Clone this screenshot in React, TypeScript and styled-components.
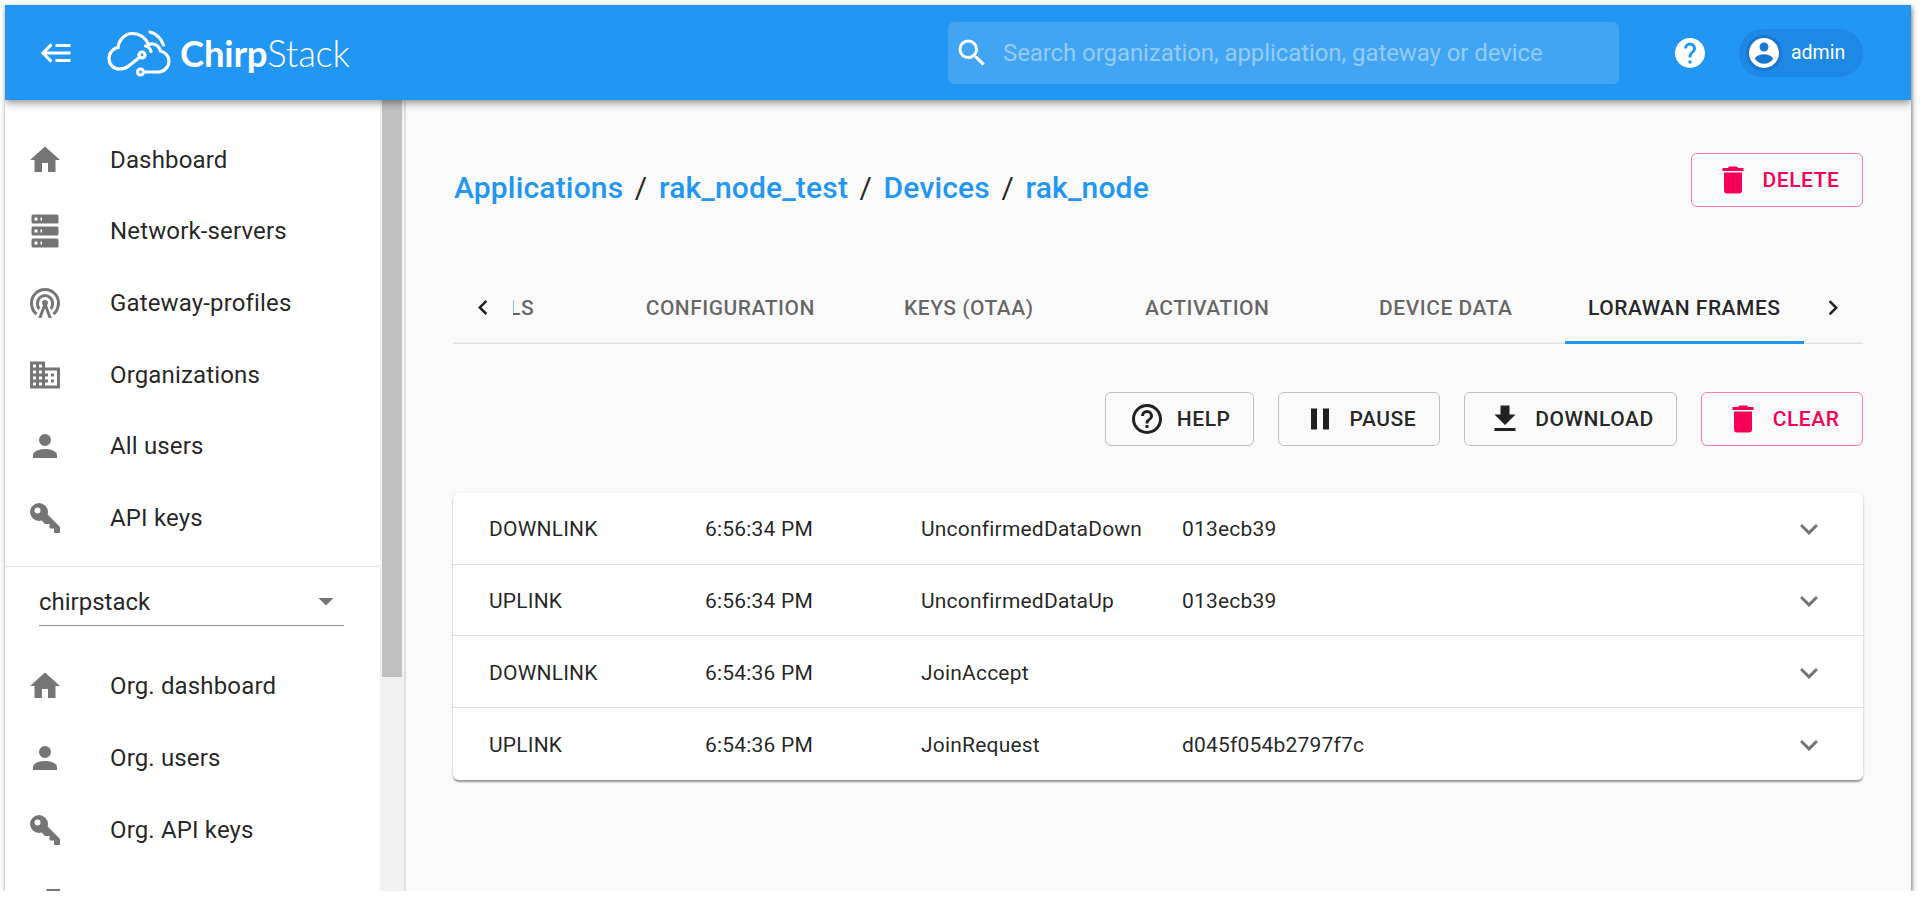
import * as React from 'react';
import styled, { createGlobalStyle } from 'styled-components';

const paths = {
  back: 'M5,13L9,17L7.6,18.42L1.18,12L7.6,5.58L9,7L5,11H21V13H5M21,6V8H11V6H21M21,16V18H11V16H21Z',
  search: 'M9.5,3A6.5,6.5 0 0,1 16,9.5C16,11.11 15.41,12.59 14.44,13.73L14.71,14H15.5L20.5,19L19,20.5L14,15.5V14.71L13.73,14.44C12.59,15.41 11.11,16 9.5,16A6.5,6.5 0 0,1 3,9.5A6.5,6.5 0 0,1 9.5,3M9.5,5C7,5 5,7 5,9.5C5,12 7,14 9.5,14C12,14 14,12 14,9.5C14,7 12,5 9.5,5Z',
  helpSolid: 'M15.07,11.25L14.17,12.17C13.45,12.89 13,13.5 13,15H11V14.5C11,13.39 11.45,12.39 12.17,11.67L13.41,10.41C13.78,10.05 14,9.55 14,9C14,7.89 13.1,7 12,7A2,2 0 0,0 10,9H8A4,4 0 0,1 12,5A4,4 0 0,1 16,9C16,9.88 15.64,10.67 15.07,11.25M13,19H11V17H13M12,2A10,10 0 0,0 2,12A10,10 0 0,0 12,22A10,10 0 0,0 22,12C22,6.47 17.5,2 12,2Z',
  helpOutline: 'M11,18H13V16H11V18M12,2A10,10 0 0,0 2,12A10,10 0 0,0 12,22A10,10 0 0,0 22,12A10,10 0 0,0 12,2M12,20C7.59,20 4,16.41 4,12C4,7.59 7.59,4 12,4C16.41,4 20,7.59 20,12C20,16.41 16.41,20 12,20M12,6A4,4 0 0,0 8,10H10A2,2 0 0,1 12,8A2,2 0 0,1 14,10C14,12 11,11.75 11,15H13C13,12.75 16,12.5 16,10A4,4 0 0,0 12,6Z',
  accountCircle: 'M12,19.2C9.5,19.2 7.29,17.92 6,16C6.03,14 10,12.9 12,12.9C14,12.9 17.97,14 18,16C16.71,17.92 14.5,19.2 12,19.2M12,5A3,3 0 0,1 15,8A3,3 0 0,1 12,11A3,3 0 0,1 9,8A3,3 0 0,1 12,5M12,2A10,10 0 0,0 2,12A10,10 0 0,0 12,22A10,10 0 0,0 22,12C22,6.47 17.5,2 12,2Z',
  home: 'M10,20V14H14V20H19V12H22L12,3L2,12H5V20H10Z',
  server: 'M4,1H20A1,1 0 0,1 21,2V6A1,1 0 0,1 20,7H4A1,1 0 0,1 3,6V2A1,1 0 0,1 4,1M4,9H20A1,1 0 0,1 21,10V14A1,1 0 0,1 20,15H4A1,1 0 0,1 3,14V10A1,1 0 0,1 4,9M4,17H20A1,1 0 0,1 21,18V22A1,1 0 0,1 20,23H4A1,1 0 0,1 3,22V18A1,1 0 0,1 4,17M9,5H10V3H9V5M9,13H10V11H9V13M9,21H10V19H9V21M5,3V5H7V3H5M5,11V13H7V11H5M5,19V21H7V19H5Z',
  tower: 'M12,10A2,2 0 0,0 10,12C10,12.6 10.27,13.13 10.68,13.5L7.5,22H9.6L12,15.5L14.4,22H16.5L13.32,13.5C13.73,13.13 14,12.6 14,12A2,2 0 0,0 12,10M7.5,16.7C6.55,15.63 6,14.2 6,12.6V12A6,6 0 0,1 18,12V12.6C18,14.2 17.45,15.63 16.5,16.7L15.1,15.2C15.66,14.5 16,13.6 16,12.6V12A4,4 0 0,0 8,12V12.6C8,13.6 8.34,14.5 8.9,15.2L7.5,16.7M5.6,20.1C3.4,18.3 2,15.3 2,12A10,10 0 0,1 22,12C22,15.3 20.6,18.3 18.4,20.1L17,18.6C18.85,17.15 20,14.7 20,12A8,8 0 0,0 4,12C4,14.7 5.15,17.15 7,18.6L5.6,20.1Z',
  domain: 'M18,15H16V17H18M18,11H16V13H18M20,19H12V17H14V15H12V13H14V11H12V9H20M10,7H8V5H10M10,11H8V9H10M10,15H8V13H10M10,19H8V17H10M6,7H4V5H6M6,11H4V9H6M6,15H4V13H6M6,19H4V17H6M12,7V3H2V21H22V7H12Z',
  account: 'M12,4A4,4 0 0,1 16,8A4,4 0 0,1 12,12A4,4 0 0,1 8,8A4,4 0 0,1 12,4M12,14C16.42,14 20,15.79 20,18V20H4V18C4,15.79 7.58,14 12,14Z',
  key: 'M22,18V22H18V19H15V16H12L9.74,13.74C9.19,13.91 8.61,14 8,14A6,6 0 0,1 2,8A6,6 0 0,1 8,2A6,6 0 0,1 14,8C14,8.61 13.91,9.19 13.74,9.74L22,18M7,5A2,2 0 0,0 5,7A2,2 0 0,0 7,9A2,2 0 0,0 9,7A2,2 0 0,0 7,5Z',
  details: 'M11,9C11,10.66 9.66,12 8,12C6.34,12 5,10.66 5,9C5,7.34 6.34,6 8,6C9.66,6 11,7.34 11,9M14,20H2V18C2,15.79 4.69,14 8,14C11.31,14 14,15.79 14,18M22,12V14H13V12M22,8V10H13V8M22,4V6H13V4Z',
  pause: 'M14,19H18V5H14M6,19H10V5H6V19Z',
  download: 'M5,20H19V18H5M19,9H15V3H9V9H5L12,16L19,9Z',
  trash: 'M19,4H15.5L14.5,3H9.5L8.5,4H5V6H19M6,19A2,2 0 0,0 8,21H16A2,2 0 0,0 18,19V7H6V19Z',
  tabLeft: 'M15.41 16.09l-4.58-4.59 4.58-4.59L14 5.5l-6 6 6 6z',
  tabRight: 'M8.59 16.34l4.58-4.59-4.58-4.59L10 5.75l6 6-6 6z',
  expand: 'M16.59 8.59L12 13.17 7.41 8.59 6 10l6 6 6-6z',
  dropdown: 'M7 10l5 5 5-5z',
};

const GlobalStyle = createGlobalStyle`
  html, body {
    margin: 0;
    background: #fff;
    overflow: hidden;
  }
  body {
    padding: 5px 0 0 5px;
    font-family: Roboto, "Liberation Sans", sans-serif;
  }
  * { box-sizing: border-box; }
`;

const Svg = styled.svg<{ $size?: number }>`
  width: ${(p) => p.$size ?? 36}px;
  height: ${(p) => p.$size ?? 36}px;
  fill: currentColor;
  flex-shrink: 0;
  display: block;
`;

const Icon = ({ d, size }: { d: string; size?: number }) => (
  <Svg viewBox="0 0 24 24" $size={size}><path d={d} /></Svg>
);

const Frame = styled.div`
  width: 1906px;
  height: 886px;
  display: flex;
  flex-direction: column;
  overflow: hidden;
  background: #fafafa;
  box-shadow: 1px 2px 5px rgba(0, 0, 0, .55);
`;

// Top bar
const Header = styled.header`
  height: 95px;
  flex-shrink: 0;
  display: flex;
  align-items: center;
  padding: 0 48px 0 34px;
  background: #2196f3;
  color: #fff;
  position: relative;
  z-index: 2;
  box-shadow: 0 3px 6px -1px rgba(0, 0, 0, .3), 0 6px 8px 0 rgba(0, 0, 0, .14);
`;

const Logo = styled.div`
  display: flex;
  align-items: center;
  margin-left: 32px;
  width: 841px;
`;

const LogoMark = styled.svg`
  width: 64px;
  height: 48px;
  flex-shrink: 0;
  fill: none;
  stroke: #fff;
  stroke-width: 3.2;
  stroke-linecap: round;
`;

const LogoText = styled.span`
  margin-left: 9px;
  font-family: Lato, sans-serif;
  font-size: 36.5px;
  font-weight: 300;
  letter-spacing: -.2px;
  b { font-weight: 700; }
`;

const Search = styled.div`
  width: 671px;
  height: 62px;
  display: flex;
  align-items: center;
  gap: 13px;
  padding-left: 6px;
  border-radius: 6px;
  background: rgba(255, 255, 255, .15);
`;

const SearchHint = styled.span`
  font-size: 24px;
  letter-spacing: -.08px;
  color: rgba(255, 255, 255, .45);
`;

const HelpLink = styled.div`
  margin-left: 53px;
  display: flex;
`;

const UserChip = styled.div`
  margin-left: 31px;
  height: 48px;
  width: 124px;
  display: flex;
  align-items: center;
  border-radius: 24px;
  background: #1e88e5;
  font-size: 19.5px;
`;

const ChipAvatar = styled.span`
  width: 36px;
  height: 36px;
  margin: 0 9px 0 7px;
  border-radius: 50%;
  background: #1976d2;
  display: flex;
  align-items: center;
  justify-content: center;
`;

// Sidebar
const Body = styled.div`
  flex: 1;
  min-height: 0;
  display: flex;
`;

const Sidebar = styled.nav`
  width: 375px;
  flex-shrink: 0;
  overflow: hidden;
  padding-top: 24px;
  background: #fff;
`;

const ScrollTrack = styled.div`
  width: 24px;
  flex-shrink: 0;
  padding: 0 2px;
  background: #f1f1f1;
`;

const ScrollThumb = styled.div`
  height: 577px;
  background: #c1c1c1;
`;

const SideRule = styled.div`
  width: 1.5px;
  flex-shrink: 0;
  background: #e0e0e0;
`;

const NavList = styled.ul`
  list-style: none;
  margin: 0;
  padding: 0;
`;

const NavItem = styled.li`
  height: 71.67px;
  display: flex;
  align-items: center;
  padding-left: 22px;
  font-size: 24px;
  letter-spacing: .15px;
  color: rgba(0, 0, 0, .87);
`;

const NavIcon = styled.span`
  width: 83px;
  flex-shrink: 0;
  color: rgba(0, 0, 0, .54);
`;

const Divider = styled.hr`
  height: 1.5px;
  margin: 12px 0 0;
  border: 0;
  background: #e0e0e0;
`;

const OrgSelect = styled.div`
  height: 59px;
  margin: 0 36px 24px 34px;
  padding-top: 21px;
  display: flex;
  align-items: flex-start;
  justify-content: space-between;
  border-bottom: 1.5px solid #949494;
  font-size: 24px;
  color: rgba(0, 0, 0, .87);
`;

const OrgArrow = styled.span`
  margin-top: -5px;
  color: rgba(0, 0, 0, .54);
`;

// Main content
const Main = styled.main`
  flex: 1;
  min-width: 0;
  padding: 53px 48px 0 47.5px;
`;

const TitleRow = styled.div`
  display: flex;
  align-items: center;
  justify-content: space-between;
`;

const Crumbs = styled.div`
  display: flex;
  padding: 15px 0 0 1px;
  font-size: 30px;
  font-weight: 500;
  letter-spacing: .17px;
  color: #2196f3;
`;

const CrumbSep = styled.span`
  margin: 0 11.5px;
  font-weight: 400;
  color: rgba(0, 0, 0, .87);
`;

const Button = styled.button<{ $danger?: boolean }>`
  height: 54px;
  display: inline-flex;
  align-items: center;
  gap: 12px;
  padding: 0 22.5px;
  border: 1.5px solid ${(p) => (p.$danger ? 'rgba(245, 0, 87, .5)' : 'rgba(0, 0, 0, .23)')};
  border-radius: 6px;
  background: transparent;
  font-family: inherit;
  font-size: 21px;
  font-weight: 500;
  letter-spacing: .55px;
  text-transform: uppercase;
  color: ${(p) => (p.$danger ? '#f50057' : 'rgba(0, 0, 0, .87)')};
`;

const TabBar = styled.div`
  margin-top: 65px;
  height: 72px;
  display: flex;
  box-shadow: inset 0 -1.5px 0 #e0e0e0;
`;

const TabArrow = styled.div`
  width: 59.5px;
  flex-shrink: 0;
  display: flex;
  align-items: center;
  justify-content: center;
  color: rgba(0, 0, 0, .87);
`;

const TabViewport = styled.div`
  flex: 1;
  min-width: 0;
  overflow: hidden;
  display: flex;
  justify-content: flex-end;
`;

const Tab = styled.div<{ $active?: boolean }>`
  width: 238.5px;
  flex-shrink: 0;
  display: flex;
  align-items: center;
  justify-content: center;
  font-size: 21px;
  font-weight: 500;
  letter-spacing: .5px;
  text-transform: uppercase;
  color: ${(p) => (p.$active ? 'rgba(0, 0, 0, .87)' : 'rgba(0, 0, 0, .6)')};
  box-shadow: ${(p) => (p.$active ? 'inset 0 -3px 0 #2196f3' : 'none')};
`;

const Toolbar = styled.div`
  margin-top: 48px;
  display: flex;
  justify-content: flex-end;
  gap: 24px;
`;

const FrameCard = styled.div`
  margin-top: 47px;
  border-radius: 6px;
  background: #fff;
  box-shadow: 0 1.5px 3px rgba(0, 0, 0, .2), 0 1.5px 1.5px rgba(0, 0, 0, .14), 0 3px 1.5px -1.5px rgba(0, 0, 0, .12);
`;

const FrameRow = styled.div`
  height: 71.67px;
  display: grid;
  grid-template-columns: 216px 216px 261px 1fr 36px;
  align-items: center;
  padding: 2px 36px 0;
  font-size: 21px;
  letter-spacing: .2px;
  color: rgba(0, 0, 0, .87);
  border-bottom: 1.5px solid #e0e0e0;

  &:last-child { border-bottom: 0; }
`;

const Expand = styled.span`
  color: rgba(0, 0, 0, .54);
`;

const topNav = [
  { d: paths.home, label: 'Dashboard' },
  { d: paths.server, label: 'Network-servers' },
  { d: paths.tower, label: 'Gateway-profiles' },
  { d: paths.domain, label: 'Organizations' },
  { d: paths.account, label: 'All users' },
  { d: paths.key, label: 'API keys' },
];

const orgNav = [
  { d: paths.home, label: 'Org. dashboard' },
  { d: paths.account, label: 'Org. users' },
  { d: paths.key, label: 'Org. API keys' },
  { d: paths.details, label: 'Service-profiles' },
];

const tabs = ['Details', 'Configuration', 'Keys (OTAA)', 'Activation', 'Device data', 'LoRaWAN frames'];

const frames = [
  ['DOWNLINK', '6:56:34 PM', 'UnconfirmedDataDown', '013ecb39'],
  ['UPLINK', '6:56:34 PM', 'UnconfirmedDataUp', '013ecb39'],
  ['DOWNLINK', '6:54:36 PM', 'JoinAccept', ''],
  ['UPLINK', '6:54:36 PM', 'JoinRequest', 'd045f054b2797f7c'],
];

export default function App() {
  return (
    <>
      <GlobalStyle />
      <Frame>
        <Header>
          <Icon d={paths.back} />
          <Logo>
            <LogoMark viewBox="0 0 64 48">
              <path d="M33 28 21 37.5C18.5 39.5 16 40 12.5 40 6.5 40 2 35.5 2 29.5 2 23.5 6.500 19 11 18.500 12 10 18.500 4.500 25.500 4.500 33 4.500 38.500 9 41.500 15.500 44 14.500 47 14.500 50 16.500 52 18 53 20 53.500 22 58 23 62 27 62 32 62 38 57 43 51 43H37.500" />
              <circle cx="35" cy="26" r="3" />
              <circle cx="33.500" cy="43" r="3" />
              <path d="M38.500 17C41 17.500 43.500 20 44 22.500M43 3C49 4.500 54 9.500 56.500 16" />
            </LogoMark>
            <LogoText><b>Chirp</b>Stack</LogoText>
          </Logo>
          <Search>
            <Icon d={paths.search} />
            <SearchHint>Search organization, application, gateway or device</SearchHint>
          </Search>
          <HelpLink><Icon d={paths.helpSolid} /></HelpLink>
          <UserChip>
            <ChipAvatar><Icon d={paths.accountCircle} size={36} /></ChipAvatar>
            admin
          </UserChip>
        </Header>
        <Body>
          <Sidebar>
            <NavList>
              {topNav.map((item) => (
                <NavItem key={item.label}>
                  <NavIcon><Icon d={item.d} /></NavIcon>
                  {item.label}
                </NavItem>
              ))}
            </NavList>
            <Divider />
            <OrgSelect>
              chirpstack
              <OrgArrow><Icon d={paths.dropdown} /></OrgArrow>
            </OrgSelect>
            <NavList>
              {orgNav.map((item) => (
                <NavItem key={item.label}>
                  <NavIcon><Icon d={item.d} /></NavIcon>
                  {item.label}
                </NavItem>
              ))}
            </NavList>
          </Sidebar>
          <ScrollTrack><ScrollThumb /></ScrollTrack>
          <SideRule />
          <Main>
            <TitleRow>
              <Crumbs>
                Applications<CrumbSep>/</CrumbSep>
                rak_node_test<CrumbSep>/</CrumbSep>
                Devices<CrumbSep>/</CrumbSep>
                rak_node
              </Crumbs>
              <Button $danger><Icon d={paths.trash} />Delete</Button>
            </TitleRow>
            <TabBar>
              <TabArrow><Icon d={paths.tabLeft} size={30} /></TabArrow>
              <TabViewport>
                {tabs.map((t) => (
                  <Tab key={t} $active={t === 'LoRaWAN frames'}>{t}</Tab>
                ))}
              </TabViewport>
              <TabArrow><Icon d={paths.tabRight} size={30} /></TabArrow>
            </TabBar>
            <Toolbar>
              <Button><Icon d={paths.helpOutline} />Help</Button>
              <Button><Icon d={paths.pause} />Pause</Button>
              <Button><Icon d={paths.download} />Download</Button>
              <Button $danger><Icon d={paths.trash} />Clear</Button>
            </Toolbar>
            <FrameCard>
              {frames.map((f, i) => (
                <FrameRow key={i}>
                  <span>{f[0]}</span>
                  <span>{f[1]}</span>
                  <span>{f[2]}</span>
                  <span>{f[3]}</span>
                  <Expand><Icon d={paths.expand} /></Expand>
                </FrameRow>
              ))}
            </FrameCard>
          </Main>
        </Body>
      </Frame>
    </>
  );
}
